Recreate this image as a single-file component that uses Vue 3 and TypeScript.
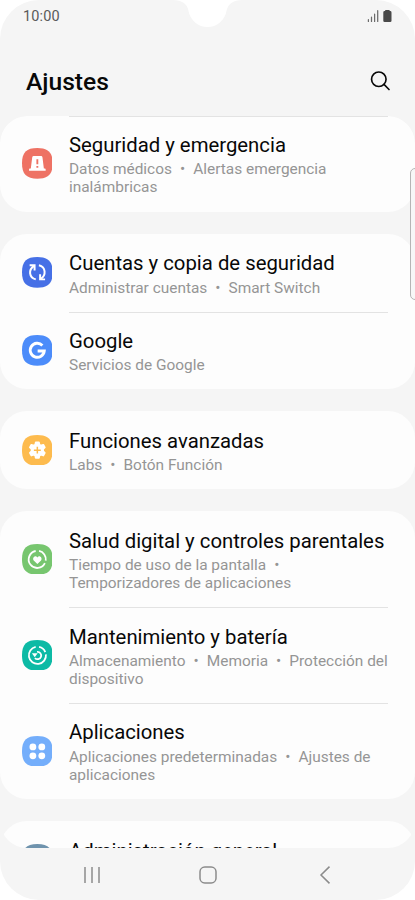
<script setup lang="ts">
interface Item {
  icon: string
  color: string
  title: string
  lines: string[][]
}

const groups: Item[][] = [
  [
    { icon: 'alert', color: '#ee7264', title: 'Seguridad y emergencia', lines: [['Datos médicos', 'Alertas emergencia'], ['inalámbricas']] },
  ],
  [
    { icon: 'sync', color: '#4670e6', title: 'Cuentas y copia de seguridad', lines: [['Administrar cuentas', 'Smart Switch']] },
    { icon: 'google', color: '#4c8cfa', title: 'Google', lines: [['Servicios de Google']] },
  ],
  [
    { icon: 'gear', color: '#fdbb4e', title: 'Funciones avanzadas', lines: [['Labs', 'Botón Función']] },
  ],
  [
    { icon: 'heart', color: '#77c66f', title: 'Salud digital y controles parentales', lines: [['Tiempo de uso de la pantalla', ''], ['Temporizadores de aplicaciones']] },
    { icon: 'care', color: '#0dbaa5', title: 'Mantenimiento y batería', lines: [['Almacenamiento', 'Memoria', 'Protección del'], ['dispositivo']] },
    { icon: 'apps', color: '#74aefb', title: 'Aplicaciones', lines: [['Aplicaciones predeterminadas', 'Ajustes de'], ['aplicaciones']] },
  ],
  [
    { icon: 'general', color: '#6f93ad', title: 'Administración general', lines: [] },
  ],
]
</script>

<template>
  <main class="screen">
    <svg class="notch" viewBox="0 0 70 30" aria-hidden="true">
      <path d="M0 0C9 0 14.500 4 15.500 11A19.300 19.300 0 0 0 53.500 11C55 4 60 0 69 0Z" fill="#fff" />
    </svg>

    <div class="status">
      <span class="clock">10:00</span>
      <svg class="status-icons" viewBox="0 0 26 14" aria-hidden="true">
        <path d="M1.400 10.700v1.700M4.500 8.200v4.200M7.600 5.200v7.200M10.700 1.700v10.700" stroke="#6c6c6c" stroke-width="1.250" stroke-linecap="round" />
        <path d="M18.700 1h3.400q.6 0 .6.600v.5h.5q1.300 0 1.300 1.300v8.300q0 1.300-1.300 1.300h-5.600q-1.300 0-1.300-1.300V3.400q0-1.300 1.300-1.300h.5v-.5q0-.6.600-.6Z" fill="#494949" />
      </svg>
    </div>

    <header class="header">
      <h1>Ajustes</h1>
      <svg class="search" viewBox="0 0 20 20" fill="none" stroke="#080808" stroke-width="1.650" stroke-linecap="round" aria-hidden="true">
        <circle cx="8.800" cy="8.200" r="7.250" />
        <path d="M14 13.400l5 5.100" />
      </svg>
    </header>

    <div class="list">
      <section v-for="(group, g) in groups" :key="g" class="card">
        <article v-for="item in group" :key="item.title" class="row" :class="{ tall: item.lines.length > 1 }">
          <svg class="icon" viewBox="0 0 31 31" aria-hidden="true">
            <path :fill="item.color" d="M15.500 0C26.500 0 31 4.500 31 15.500S26.500 31 15.500 31 0 26.500 0 15.500 4.500 0 15.500 0Z" />
            <g v-if="item.icon === 'alert'">
              <path fill="#fff" d="M11.800 8.200h7.400q1.300 0 1.500 1.300l1.400 11.300h1q.8 0 .8.900v1.400H7.100v-1.400q0-.9.800-.9h1l1.400-11.300q.2-1.300 1.500-1.300Z" />
              <path d="M15.500 11.300v5.200M15.500 18.300v1.700" fill="none" :stroke="item.color" stroke-width="1.900" />
            </g>
            <g v-else-if="item.icon === 'sync'" fill="none" stroke="#fff" stroke-width="2">
              <path d="M13.900 22.600C6.900 20.800 6.300 12.800 12.100 8.900M17.100 8.400C24.100 10.200 24.700 18.200 18.900 22.100" />
              <path d="M7.700 8.400h5v5.200M23.300 22.600h-5v-5.200" />
            </g>
            <path v-else-if="item.icon === 'google'" d="M20.600 10.500A7.100 7.100 0 1 0 22.500 16.200H15.800" fill="none" stroke="#fff" stroke-width="2.900" />
            <g v-else-if="item.icon === 'gear'">
              <path fill="#fff" stroke="#fff" stroke-width="1.800" stroke-linejoin="round" d="M13.900 7.500h3.200l.5 2.300 1.600.9 2.300-.8 1.500 2.700-1.700 1.600v2.200l1.700 1.600-1.500 2.700-2.300-.8-1.600.9-.5 2.300h-3.200l-.5-2.300-1.600-.9-2.300.8L8 18l1.700-1.600v-2.200L8 12.600l1.500-2.700 2.300.8 1.600-.9Z" />
              <path d="M15.500 11.800v7M12 15.300h7" :stroke="item.color" stroke-width="1.500" />
            </g>
            <g v-else-if="item.icon === 'heart'" transform="translate(.8 .8) scale(.95)">
              <path d="M17.300 6.600a9.100 9.100 0 0 1 7.100 10.300M23.500 19.600A9.100 9.100 0 1 1 13.700 6.600" fill="none" stroke="#fff" stroke-width="1.900" />
              <path fill="#fff" d="M15.500 20.500L11.600 16.600C9.600 14 13.300 10.300 15.500 13.400 17.700 10.300 21.400 14 19.400 16.600Z" />
            </g>
            <g v-else-if="item.icon === 'care'" fill="none" stroke="#fff" stroke-width="1.900" transform="translate(.8 .8) scale(.95)">
              <path d="M17.300 6.600a9.100 9.100 0 0 1 6.600 5.400M24.600 14.500A9.100 9.100 0 1 1 13.700 6.600" />
              <path d="M15.200 11.800a3.900 3.900 0 1 1-2.300 6.600" />
              <path d="M9.700 13.300h6.100l-3.100 4.200Z" fill="#fff" stroke="none" />
            </g>
            <g v-else-if="item.icon === 'apps'" fill="#fff">
              <circle cx="11" cy="11" r="3.450" />
              <circle cx="20" cy="11" r="3.450" />
              <circle cx="11" cy="20" r="3.450" />
              <circle cx="20" cy="20" r="3.450" />
            </g>
          </svg>
          <div class="text">
            <h2>{{ item.title }}</h2>
            <p v-for="(line, l) in item.lines" :key="l">
              <template v-for="(part, p) in line" :key="p"><span v-if="p > 0" class="dot">•</span>{{ part }}</template>
            </p>
          </div>
        </article>
      </section>
    </div>

    <nav class="nav">
      <svg viewBox="0 0 24 24"><path d="M5 4v16M12 4v16M19 4v16" /></svg>
      <svg viewBox="0 0 24 24"><rect x="4" y="4" width="16" height="16" rx="4.800" /></svg>
      <svg viewBox="0 0 24 24"><path d="M16.500 3.600L8 12l8.500 8.400" /></svg>
    </nav>

    <div class="edge-handle"></div>
  </main>
</template>

<style>
body {
  margin: 0;
  background: #fff;
}
</style>

<style scoped>
.screen {
  position: relative;
  box-sizing: border-box;
  width: 415px;
  height: 900px;
  overflow: hidden;
  display: flex;
  flex-direction: column;
  border-radius: 39px;
  background: #f5f5f5;
  font-family: Roboto, "Liberation Sans", sans-serif;
  color: #080808;
}

.notch {
  position: absolute;
  top: 0;
  left: 173px;
  width: 70px;
  height: 30px;
}

.status {
  display: flex;
  justify-content: space-between;
  align-items: center;
  height: 32px;
  padding: 0 22px 0 23px;
}

.clock {
  padding-top: 1px;
  font-size: 14.500px;
  line-height: 32px;
  letter-spacing: 0.150px;
  color: #5a5a5a;
}

.status-icons {
  width: 26px;
  height: 14px;
}

.header {
  display: flex;
  justify-content: space-between;
  align-items: center;
  height: 83.800px;
  box-sizing: border-box;
  padding: 0 25px 0 26px;
}

h1 {
  margin: 17px 0 0;
  font-size: 24.600px;
  line-height: 30px;
  font-weight: 500;
}

.search {
  width: 20px;
  height: 20px;
  margin-top: 13.500px;
}

.list {
  height: 732.200px;
  flex: none;
  overflow: hidden;
  display: flex;
  flex-direction: column;
  gap: 22.200px;
  border-radius: 27px;
}

.card {
  flex: none;
  border-radius: 27px;
  background: #fdfdfd;
}

.row {
  position: relative;
  display: flex;
  box-sizing: border-box;
  height: 77.700px;
  padding-left: 21.700px;
  gap: 16.600px;
}

.row.tall {
  height: 95.900px;
}

.row + .row::before,
.card:first-child .row::before {
  content: "";
  position: absolute;
  top: 0;
  left: 69px;
  right: 27px;
  height: 1px;
  background: #e3e3e3;
}

.icon {
  flex: none;
  align-self: center;
  width: 30.700px;
  height: 30.700px;
  margin-bottom: 0.400px;
}

.text {
  padding-top: 16.400px;
  white-space: nowrap;
}

h2 {
  margin: 0 0 2.300px;
  font-size: 20.320px;
  line-height: 26px;
  font-weight: 400;
}

p {
  margin: 0;
  font-size: 15.430px;
  line-height: 18px;
  color: #959595;
}

.dot {
  margin: 0 8px;
}

.nav {
  display: flex;
  flex: none;
  align-items: center;
  justify-content: space-between;
  height: 52px;
  padding: 2px 78.500px 0 79.700px;
  box-sizing: border-box;
}

.nav svg {
  width: 24px;
  height: 24px;
  fill: none;
  stroke: #8b8b8b;
  stroke-width: 1.500;
}

.edge-handle {
  position: absolute;
  top: 168px;
  left: 410px;
  box-sizing: border-box;
  width: 12px;
  height: 132px;
  border: 1px solid #b5b5b5;
  border-radius: 5px;
  background: #f7f7f7;
}
</style>
